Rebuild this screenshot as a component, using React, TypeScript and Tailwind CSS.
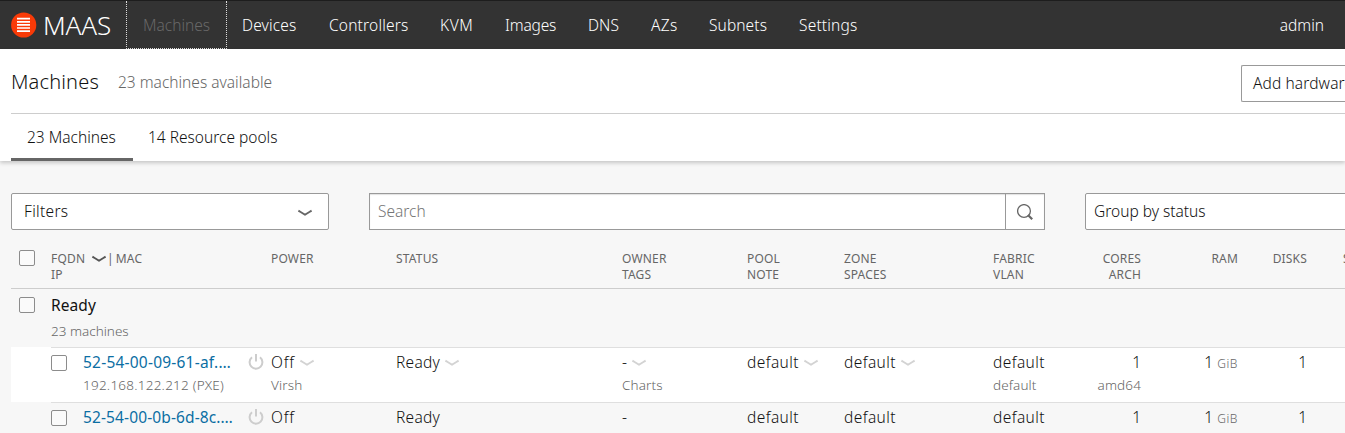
import type { ReactNode } from "react";
import clsx from "clsx";

const NAV = [
  { label: "Devices", cls: "w-[87px] tracking-[0.16px]" },
  { label: "Controllers", cls: "w-[111px] tracking-[0.19px]" },
  { label: "KVM", cls: "w-[65px] tracking-[0.6px]" },
  { label: "Images", cls: "w-[83px] tracking-[-0.15px]" },
  { label: "DNS", cls: "w-[63px] tracking-[0.07px]" },
  { label: "AZs", cls: "w-[58px] tracking-[0.3px]" },
  { label: "Subnets", cls: "w-[90px] tracking-[0.1px]" },
  { label: "Settings", cls: "w-[90px] tracking-[0.19px]" },
];

const GRID =
  "grid grid-cols-[220px_125px_226px_125px_97px_149px_60px_88px_97px_69px_120px]";

function Chevron({ className }: { className?: string }) {
  return (
    <svg viewBox="0 0 16 16" className={clsx("size-4 shrink-0", className)} fill="none">
      <path d="M1.4 5.6C4 7.2 6 8.4 8 9.7c2-1.3 4-2.5 6.6-4.1" stroke="currentColor" strokeWidth="1.9" />
    </svg>
  );
}

function PowerIcon() {
  return (
    <svg viewBox="0 0 16 16" className="ml-[1px] size-4 shrink-0 text-[#cdcdcd]" fill="none" stroke="currentColor" strokeWidth="2">
      <path d="M4 3.3a6.4 6.4 0 1 0 8 0" />
      <path d="M8 0v7.6" />
    </svg>
  );
}

function Checkbox({ className }: { className?: string }) {
  return <span className={clsx("block size-4 shrink-0 rounded-[2px] border border-[#8c8c8c] bg-white/40", className)} />;
}

function Cell({ main, sub, menu, right }: { main: ReactNode; sub?: string; menu?: boolean; right?: boolean }) {
  return (
    <div className={clsx("flex flex-col", right && "items-end")}>
      <div className="flex h-6 items-center gap-1">
        <span className="pt-[2px]">{main}</span>
        {menu && <Chevron className="mt-0.5 text-[#d3d3d3]" />}
      </div>
      {sub && <div className="h-[22px] text-[13.5px] leading-[22px] tracking-[0.12px] text-[#666]">{sub}</div>}
    </div>
  );
}

function Default() {
  return <span className="tracking-[0.42px]">default</span>;
}

function MachineRow({ name, active, nameClass }: { name: string; active?: boolean; nameClass: string }) {
  return (
    <div className={clsx("ml-[11px] h-[55px] pl-10", active && "bg-white")}>
      <div className={clsx(GRID, "h-[55px] border-t border-[#dfdfdf] pt-[2px]")}>
        <div className="flex">
          <Checkbox className="mt-[5px] mr-4 bg-white" />
          <div className="w-[164px]">
            <div className={clsx("h-6 font-normal leading-6 text-[#0b6ea3]", nameClass)}>{name}</div>
            {active && (
              <div className="h-[22px] text-[13.5px] leading-[22px] tracking-[0.24px] text-[#666]">192.168.122.212 (PXE)</div>
            )}
          </div>
          <div className="flex h-6 items-center"><PowerIcon /></div>
        </div>
        <Cell main={<span className="tracking-[0.84px]">Off</span>} sub={active ? "Virsh" : undefined} menu={active} />
        <Cell main={<span className="tracking-[0.26px]">Ready</span>} menu={active} />
        <Cell main="-" sub={active ? "Charts" : undefined} menu={active} />
        <Cell main={<Default />} menu={active} />
        <Cell main={<Default />} menu={active} />
        <Cell main={<Default />} sub={active ? "default" : undefined} />
        <Cell right main="1" sub={active ? "amd64" : undefined} />
        <Cell right main={<>1 <span className="text-[12px] tracking-[0.6px] text-[#666]">GiB</span></>} />
        <Cell right main="1" />
      </div>
    </div>
  );
}

function Heading({ top, bottom, right }: { top: ReactNode; bottom?: string; right?: boolean }) {
  return (
    <div className={clsx(right && "text-right")}>
      <div className="h-4">{top}</div>
      {bottom && <div className="h-4">{bottom}</div>}
    </div>
  );
}

export default function App() {
  return (
    <div className="h-[433px] w-full overflow-hidden bg-[#f7f7f7] font-['Noto_Sans',sans-serif] text-[15.5px] font-[340] whitespace-nowrap text-[#111]">
      <nav className="flex h-[49px] items-center border-t border-[#1d1d1d] bg-[#333] text-white">
        <div className="flex w-[126px] items-center pl-[11px]">
          <svg viewBox="0 0 26 26" className="mr-[6px] size-[26px]">
            <circle cx="12.7" cy="13" r="12.6" fill="#f93a07" />
            <path d="M6 6.7h13M6 9.8h13M6 12.9h13M6 16h13M6 19.1h13" stroke="#fff" strokeWidth="1.7" />
          </svg>
          <span className="text-[26px] leading-8 font-light tracking-[-0.12px]">MAAS</span>
        </div>
        <div className="flex h-12 w-[101px] items-center border border-t-0 border-dotted border-[#ddd] pt-[3px] pl-4 text-[#686868]">Machines</div>
        {NAV.map((n) => (
          <div key={n.label} className={clsx("pt-[2px] pl-[15px]", n.cls)}>{n.label}</div>
        ))}
        <div className="ml-auto pt-[2px] pr-[21px]">admin</div>
      </nav>

      <header className="relative h-28 bg-white pl-[11px] shadow-[0_2px_4px_rgba(0,0,0,0.2)]">
        <div className="flex h-[65px] items-center border-b border-[#cdcdcd]">
          <h1 className="w-[107px] pt-[2px] text-[20px] font-light tracking-[0.17px]">Machines</h1>
          <span className="pt-[3px] text-[#666]">23 machines available</span>
          <button className="mt-1 ml-auto h-[37px] w-[104px] overflow-hidden rounded-l-[2px] border border-r-0 border-[#999] bg-white pt-[2px] pl-[11px] text-left tracking-[0.12px]">
            Add hardware
          </button>
        </div>
        <div className="flex h-[47px]">
          <div className="flex w-[122px] items-center border-b-[3px] border-[#666] pt-[3px] pl-4">23 Machines</div>
          <div className="flex items-center border-b-[3px] border-transparent pt-[3px] pl-[15px]">14 Resource pools</div>
        </div>
      </header>

      <div className="flex h-20 pt-8 pl-[11px]">
        <div className="flex h-[37px] w-[318px] shrink-0 items-center justify-between rounded-[2px] border border-[#999] bg-white pr-[15px] pl-3 tracking-[0.3px]">
          Filters
          <Chevron className="mt-0.5 text-[#666]" />
        </div>
        <div className="ml-10 flex h-[37px] w-[676px] shrink-0 border border-[#999] bg-white shadow-[inset_0_1px_1px_rgba(0,0,0,0.12)]">
          <div className="flex flex-1 items-center pl-2 text-[#757575]">Search</div>
          <div className="flex w-[39px] items-center justify-center border-l border-[#999]">
            <svg viewBox="0 0 16 16" className="size-4" fill="none" stroke="#666">
              <circle cx="7" cy="7" r="6.4" strokeWidth="1.3" />
              <path d="M11 11l4.2 4.2" strokeWidth="2.2" />
            </svg>
          </div>
        </div>
        <div className="ml-10 flex h-[37px] w-[300px] shrink-0 items-center rounded-[2px] border border-[#999] bg-white pl-2">Group by status</div>
      </div>

      <div className="ml-[11px] flex h-12 border-b border-[#cdcdcd] pt-[9px] pl-2 text-[12px] leading-4 font-normal tracking-[0.18px] text-[#666]">
        <Checkbox className="mr-4" />
        <div className={clsx(GRID, "pt-[1px]")}>
          <Heading
            top={<span className="flex"><span className="w-10">FQDN</span><Chevron className="text-[#555]" />|<span className="ml-[2px]">MAC</span></span>}
            bottom="IP"
          />
          <Heading top="POWER" />
          <Heading top="STATUS" />
          <Heading top="OWNER" bottom="TAGS" />
          <Heading top="POOL" bottom="NOTE" />
          <Heading top="ZONE" bottom="SPACES" />
          <Heading top="FABRIC" bottom="VLAN" />
          <Heading right top="CORES" bottom="ARCH" />
          <Heading right top="RAM" />
          <Heading right top="DISKS" />
          <div className="pl-9">
            <Heading top="STORAGE" />
          </div>
        </div>
      </div>

      <div className="ml-[11px] flex h-[58px] pt-1 pl-2">
        <Checkbox className="mt-1 mr-4" />
        <div>
          <div className="h-6 leading-6 font-normal tracking-[0.09px]">Ready</div>
          <div className="mt-1 text-[13.5px] leading-5 text-[#666]">23 machines</div>
        </div>
      </div>

      <MachineRow active name="52-54-00-09-61-af.…" nameClass="tracking-[0.22px]" />
      <MachineRow name="52-54-00-0b-6d-8c.…" nameClass="tracking-[0.12px]" />
    </div>
  );
}
